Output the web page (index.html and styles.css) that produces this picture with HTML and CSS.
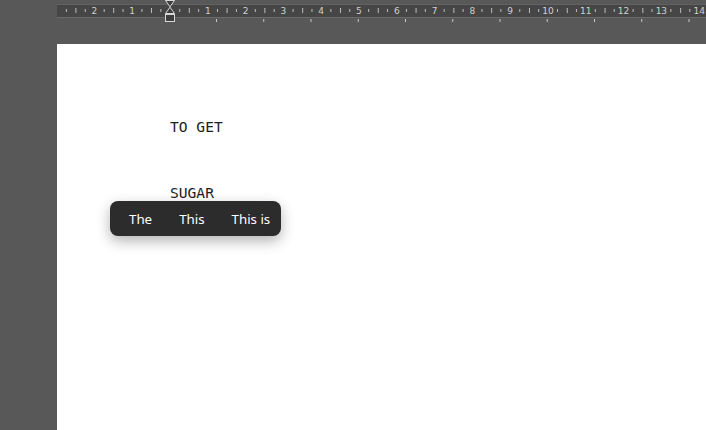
FILE: index.html
```html
<!DOCTYPE html>
<html>
<head>
<meta charset="utf-8">
<link rel="stylesheet" href="styles.css">
</head>
<body>
<div class="app">
  <div class="topbar">
    <div class="ruler">
      <div class="ruler-labels">
        <span class="cell"></span>
        <span class="cell">2</span>
        <span class="cell">1</span>
        <span class="cell"></span>
        <span class="cell">1</span>
        <span class="cell">2</span>
        <span class="cell">3</span>
        <span class="cell">4</span>
        <span class="cell">5</span>
        <span class="cell">6</span>
        <span class="cell">7</span>
        <span class="cell">8</span>
        <span class="cell">9</span>
        <span class="cell">10</span>
        <span class="cell">11</span>
        <span class="cell">12</span>
        <span class="cell">13</span>
        <span class="cell">14</span>
      </div>
    </div>
    <div class="tabstops"></div>
    <svg class="indent-marker" width="12" height="23" viewBox="0 0 12 23">
      <path d="M1.5 0.5 H10.5 L6 6.8 Z" fill="#3e3e3e" stroke="#d8d8d8" stroke-width="1"/>
      <path d="M6 7.2 L10.5 13.5 H1.5 Z" fill="#3e3e3e" stroke="#d8d8d8" stroke-width="1"/>
      <rect x="1.5" y="14.5" width="9" height="7" fill="#3e3e3e" stroke="#d8d8d8" stroke-width="1"/>
    </svg>
  </div>
  <div class="page">
    <div class="script-text">
      <div class="line">TO GET</div>
      <div class="line">SUGAR</div>
    </div>
    <div class="suggest">
      <span class="item">The</span>
      <span class="item">This</span>
      <span class="item">This is</span>
    </div>
  </div>
</div>
</body>
</html>
```
FILE: styles.css
```css
html, body {
  margin: 0;
  padding: 0;
  background: #585858;
  overflow: hidden;
}
.app {
  width: 706px;
  height: 430px;
  display: flex;
  flex-direction: column;
}
.topbar {
  position: relative;
  height: 44px;
  flex: none;
}
.ruler {
  margin: 4px 0 0 57px;
  height: 14px;
  background-color: #464646;
  border-top: 1px solid #626262;
  border-bottom: 1px solid #6a6a6a;
  box-sizing: border-box;
  background-image:
    linear-gradient(to right, #bdbdbd 0 1px, transparent 1px),
    linear-gradient(to right, #bdbdbd 0 1px, transparent 1px);
  background-size: 37.8px 5px, 18.9px 3px;
  background-repeat: repeat-x, repeat-x;
  background-position: 18.4px 3px, 8.9px 4px;
  overflow: hidden;
}
.ruler-labels {
  display: flex;
  margin-left: -19.3px;
  height: 100%;
  align-items: center;
}
.cell {
  flex: none;
  width: 37.8px;
  text-align: center;
  font-family: "DejaVu Sans", sans-serif;
  font-size: 9px;
  line-height: 11px;
  color: #d0d0d0;
}
.tabstops {
  margin-left: 216px;
  height: 4px;
  margin-top: 1px;
  background-image: linear-gradient(to right, #c8c8c8 0 1px, transparent 1px);
  background-size: 47.25px 3px;
  background-repeat: repeat-x;
}
.indent-marker {
  position: absolute;
  left: 164px;
  top: 0;
}
.page {
  position: relative;
  flex: 1;
  margin-left: 57px;
  background: #ffffff;
}
.script-text {
  padding: 74px 0 0 113px;
  display: flex;
  flex-direction: column;
  gap: 48px;
  font-family: "DejaVu Sans Mono", "Liberation Mono", monospace;
  font-size: 14.6px;
  color: #1e1e1e;
}
.line {
  line-height: 18px;
  height: 18px;
}
.suggest {
  position: absolute;
  left: 53px;
  top: 157px;
  width: 171px;
  height: 35px;
  box-sizing: border-box;
  display: flex;
  align-items: center;
  gap: 27px;
  padding: 0 12px 0 19px;
  background: #2c2c2c;
  border-radius: 8px;
  box-shadow: 0 5px 14px rgba(0, 0, 0, 0.3);
  font-family: "Noto Sans", "Open Sans", sans-serif;
  font-size: 13.3px;
  color: #ffffff;
  white-space: nowrap;
}
```
